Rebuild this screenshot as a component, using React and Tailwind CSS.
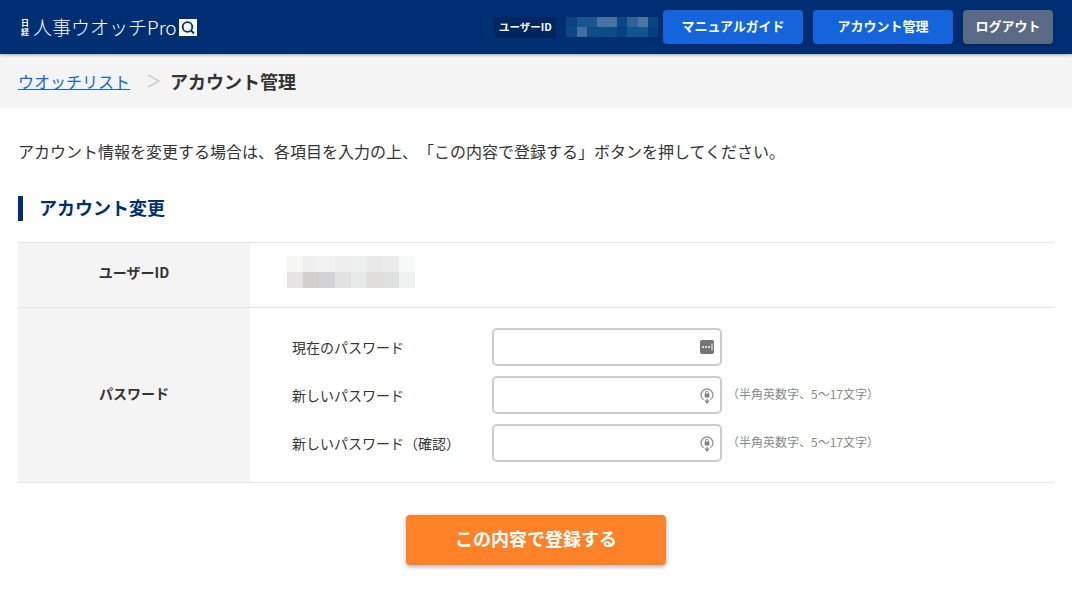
import React from 'react';

const FONT = "font-['Noto_Sans_CJK_JP','Noto_Sans',sans-serif]";

const headerCells = [
  'bg-[#0f4080]', 'bg-[#1a5590]', 'bg-[#1a5590]', 'bg-[#4673a3]', 'bg-[#4673a3]', 'bg-[#0c4784]', 'bg-[#2f6396]', 'bg-[#4a78a6]', 'bg-[#0b4580]',
  'bg-[#0c4784]', 'bg-[#3f6f9f]', 'bg-[#0e4d88]', 'bg-[#0e4d88]', 'bg-[#0c4a86]', 'bg-[#06427e]', 'bg-[#12548e]', 'bg-[#12548e]', 'bg-[#053f7b]',
];

const idCells = [
  'bg-[#f7f7f5]', 'bg-[#f0f0f0]', 'bg-[#f2f2f2]', 'bg-[#eeeeee]', 'bg-[#edf0ef]', 'bg-[#eae9ea]', 'bg-[#ebebeb]', 'bg-[#f7f9f8]',
  'bg-[#e5e3e4]', 'bg-[#d2cfcd]', 'bg-[#d3d3d7]', 'bg-[#e2e2e2]', 'bg-[#e6e9e8]', 'bg-[#dfdddb]', 'bg-[#dfe1e0]', 'bg-[#f0f2f1]',
];

function KeyIcon() {
  return (
    <svg width="14" height="14" viewBox="0 0 14 14">
      <rect width="14" height="14" rx="2" fill="#757575" />
      <circle cx="3" cy="7" r="1" fill="#fff" />
      <circle cx="6" cy="7" r="1" fill="#fff" />
      <circle cx="9" cy="7" r="1" fill="#fff" />
      <rect x="11.5" y="3.5" width="1" height="7" fill="#fff" />
    </svg>
  );
}

function LockIcon() {
  return (
    <svg width="14" height="17" viewBox="0 0 14 17" fill="none">
      <path d="M3.6 12.7A5.9 5.9 0 1 1 10.4 12.7" stroke="#999999" strokeWidth="1.4" />
      <path d="M7 12v3.6M5 13.4 7 16l2-2.6" stroke="#8a8a8a" strokeWidth="1.3" />
      <rect x="4.7" y="6.8" width="4.6" height="3.8" rx="0.8" fill="#808080" />
      <path d="M5.6 7V5.8a1.4 1.4 0 0 1 2.8 0V7" stroke="#808080" strokeWidth="0.9" />
    </svg>
  );
}

function Field({ label, hint, icon }) {
  return (
    <div className="flex items-center h-[38px]">
      <span className="w-[200px] text-[14px] text-[#333]">{label}</span>
      <div className="flex items-center justify-end w-[230px] h-[38px] pr-[6px] bg-white border-2 border-[#cccccc] rounded-[5px]">
        {icon}
      </div>
      {hint && <span className="ml-[5px] pb-[2px] text-[12px] text-[#888]">{hint}</span>}
    </div>
  );
}

export default function App() {
  return (
    <div className={`${FONT} w-[1072px] h-[592px] overflow-hidden bg-white text-[#333] [text-spacing-trim:space-all]`}>
      <header className="relative z-10 flex items-center h-[54px] pl-[21px] pr-[19px] bg-[#002e73] shadow-[0_1px_3px_rgba(0,0,0,0.3)]">
        <div className="flex items-center text-white">
          <span className="flex flex-col w-[9px] text-[8px] leading-[9px] font-bold">
            <span>日</span>
            <span>経</span>
          </span>
          <span className="ml-[3px] pb-[2px] text-[19px] font-light leading-none whitespace-nowrap">人事ウオッチPro</span>
          <svg className="ml-[2px]" width="18" height="17" viewBox="0 0 18 17">
            <rect width="18" height="17" fill="#fff" />
            <circle cx="8.5" cy="8" r="4.8" fill="none" stroke="#002e73" strokeWidth="1.8" />
            <path d="M12 11.5l3 3" stroke="#002e73" strokeWidth="1.8" />
          </svg>
        </div>
        <div className="ml-auto flex items-center">
          <span className="flex items-center justify-center w-[62px] h-[21px] rounded-[3px] bg-[#00265f] text-white text-[10.5px] font-bold">ユーザーID</span>
          <div className="ml-[10px] grid grid-cols-[repeat(9,10.2px)] auto-rows-[10px] mr-[5px]">
            {headerCells.map((c, i) => <div key={i} className={c} />)}
          </div>
          <button className="w-[140px] h-[34px] pb-[2px] rounded-[4px] bg-[#1464db] text-white text-[13px] font-bold shadow-[0_1px_3px_rgba(0,0,0,0.25)]">マニュアルガイド</button>
          <button className="ml-[10px] w-[140px] h-[34px] pb-[2px] rounded-[4px] bg-[#1464db] text-white text-[13px] font-bold shadow-[0_1px_3px_rgba(0,0,0,0.25)]">アカウント管理</button>
          <button className="ml-[10px] w-[90px] h-[34px] pb-[2px] rounded-[4px] bg-[#5a6a84] text-white text-[13px] font-bold shadow-[0_1px_3px_rgba(0,0,0,0.25)]">ログアウト</button>
        </div>
      </header>

      <nav className="flex items-center h-[54px] px-[18px] bg-[#f4f4f4]">
        <a className="text-[16px] text-[#1464db] underline">ウオッチリスト</a>
        <svg className="ml-[17px]" width="13" height="14" viewBox="0 0 13 14" fill="none">
          <path d="M1 1l11 6-11 6" stroke="#cccccc" strokeWidth="1.5" />
        </svg>
        <span className="ml-[10px] text-[18px] font-bold text-[#333]">アカウント管理</span>
      </nav>

      <main className="px-[18px]">
        <p className="mt-[31px] text-[16px] leading-[24px] whitespace-nowrap">
          アカウント情報を変更する場合は、各項目を入力の上、「この内容で登録する」ボタンを押してください。
        </p>
        <h2 className="mt-[33px] h-[25px] pl-[16px] border-l-[5px] border-[#002e73] text-[18px] font-bold leading-[23px] text-[#002e73]">アカウント変更</h2>

        <div className="mt-[21px] border-t border-b border-[#e5e5e5]">
          <div className="flex h-[65px] border-b border-[#e5e5e5]">
            <div className="flex items-center justify-center w-[232px] pb-[6px] bg-[#f4f4f4] text-[14px] font-bold">ユーザーID</div>
            <div className="flex items-center pl-[37px] pb-[6px]">
              <div className="grid grid-cols-[repeat(8,16px)] auto-rows-[16px]">
                {idCells.map((c, i) => <div key={i} className={c} />)}
              </div>
            </div>
          </div>
          <div className="flex h-[174px]">
            <div className="flex items-center justify-center w-[232px] pb-[4px] bg-[#f4f4f4] text-[14px] font-bold">パスワード</div>
            <div className="flex flex-col justify-center gap-[10px] pl-[42px]">
              <Field label="現在のパスワード" icon={<KeyIcon />} />
              <Field label="新しいパスワード" icon={<LockIcon />} hint="（半角英数字、5〜17文字）" />
              <Field label="新しいパスワード（確認）" icon={<LockIcon />} hint="（半角英数字、5〜17文字）" />
            </div>
          </div>
        </div>

        <div className="mt-[32px] flex justify-center">
          <button className="w-[260px] h-[50px] pb-[4px] rounded-[4px] bg-[#ff8228] text-white text-[18px] font-bold shadow-[0_2px_4px_rgba(0,0,0,0.3)]">この内容で登録する</button>
        </div>
      </main>
    </div>
  );
}
